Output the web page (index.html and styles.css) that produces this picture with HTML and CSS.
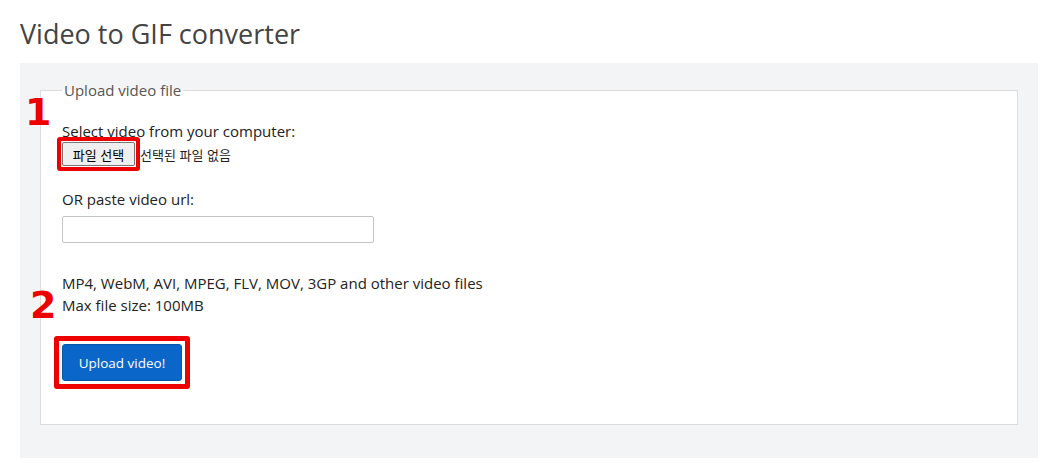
FILE: index.html
```html
<!DOCTYPE html>
<html lang="ko">
<head>
<meta charset="utf-8">
<title>Video to GIF converter</title>
<link rel="stylesheet" href="styles.css">
</head>
<body>
<h1 class="title">Video to GIF converter</h1>
<div class="panel">
  <fieldset class="box">
    <legend class="legend">Upload video file</legend>
    <span class="mark mark-1">1</span>
    <span class="mark mark-2">2</span>
    <div class="label">Select video from your computer:</div>
    <div class="file-row">
      <span class="hl hl-file"><button class="file-btn" type="button">파일 선택</button></span><span class="file-name">선택된 파일 없음</span>
    </div>
    <div class="label label-url">OR paste video url:</div>
    <input class="url" type="text">
    <p class="info">MP4, WebM, AVI, MPEG, FLV, MOV, 3GP and other video files<br>Max file size: 100MB</p>
    <div class="upload-row">
      <span class="hl hl-upload"><button class="upload" type="button">Upload video!</button></span>
    </div>
  </fieldset>
</div>
</body>
</html>
```
FILE: styles.css
```css
html, body {
  margin: 0;
  padding: 0;
  background: #fff;
}
body {
  font-family: "Open Sans", "Noto Sans CJK KR", sans-serif;
  color: #222;
  font-size: 15px;
}
.title {
  margin: 0;
  padding: 17px 20px 12px;
  font-size: 27px;
  line-height: 34px;
  font-weight: 400;
  color: #444;
}
.panel {
  margin: 0 17px 0 20px;
  background: #f3f4f6;
  padding: 17px 20px 33px;
}
.box {
  position: relative;
  margin: 0;
  padding: 0 21px 43px;
  border: 1px solid #dcdcdc;
  background: #fff;
  min-width: 0;
}
.legend {
  padding: 0 2px;
  font-size: 15px;
  line-height: 20px;
  color: #555;
}
.mark {
  position: absolute;
  font-family: "DejaVu Sans", sans-serif;
  font-weight: 700;
  font-size: 38px;
  line-height: 38px;
  color: #ee0000;
}
.mark-1 { left: -16px; top: -7px; }
.mark-2 { left: -11px; top: 186px; }
.label {
  margin-top: 21px;
  line-height: 20px;
}
.label-url {
  margin-top: 23px;
}
.file-row {
  display: flex;
  align-items: center;
  margin-top: 1px;
  height: 24px;
}
.hl {
  display: inline-flex;
  border: 4px solid #ee0000;
  border-radius: 3px;
  background: #fff;
  padding: 1px;
  margin: -5px;
}
.hl-upload {
  border-width: 5px;
  padding: 3px;
  margin: -8px;
}
.file-btn {
  font-family: "Noto Sans CJK KR", sans-serif;
  font-size: 13px;
  height: 24px;
  width: 73px;
  padding: 0;
  color: #000;
  background: #efefef;
  border: 1px solid #767676;
  border-radius: 2px;
}
.file-name {
  font-family: "Noto Sans CJK KR", sans-serif;
  font-size: 13px;
  margin-left: 5px;
  color: #222;
}
.url {
  display: block;
  box-sizing: border-box;
  margin-top: 7px;
  width: 312px;
  height: 27px;
  border: 1px solid #c4c4c4;
  border-radius: 2px;
  padding: 0 6px;
}
.info {
  margin: 29px 0 0;
  line-height: 22px;
}
.upload-row {
  display: flex;
  margin-top: 28px;
}
.upload {
  display: block;
  width: 120px;
  height: 37px;
  font-family: "Open Sans", sans-serif;
  font-size: 13.5px;
  color: #fff;
  background: #0a66c8;
  border: 1px solid #0856a8;
  border-radius: 3px;
}
```
